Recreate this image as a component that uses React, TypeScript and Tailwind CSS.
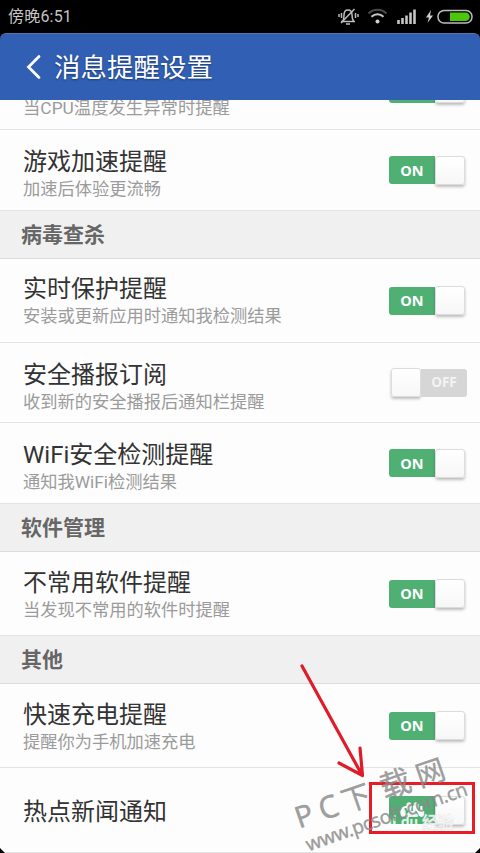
type Row = {
  title?: string;
  sub?: string;
  on: boolean;
  height: string;
  pad?: string;
};

type Group = {
  name?: string;
  headClass?: string;
  rows: Row[];
};

const groups: Group[] = [
  {
    rows: [{ title: "游戏加速提醒", sub: "加速后体验更流畅", on: true, height: "h-[81px]", pad: "pt-[18px]" }],
  },
  {
    name: "病毒查杀",
    headClass: "h-12",
    rows: [
      { title: "实时保护提醒", sub: "安装或更新应用时通知我检测结果", on: true, height: "h-[84px]", pad: "pt-4" },
      { title: "安全播报订阅", sub: "收到新的安全播报后通知栏提醒", on: false, height: "h-20", pad: "pt-[18px]" },
      { title: "WiFi安全检测提醒", sub: "通知我WiFi检测结果", on: true, height: "h-[81px]", pad: "pt-[18px]" },
    ],
  },
  {
    name: "软件管理",
    headClass: "h-12",
    rows: [{ title: "不常用软件提醒", sub: "当发现不常用的软件时提醒", on: true, height: "h-[84px]" }],
  },
  {
    name: "其他",
    headClass: "h-12",
    rows: [
      { title: "快速充电提醒", sub: "提醒你为手机加速充电", on: true, height: "h-[84px]" },
      { title: "热点新闻通知", on: true, height: "h-[85px]" },
    ],
  },
];

function Toggle({ on }: { on: boolean }) {
  const knob = (
    <span className="h-[29px] w-[30px] shrink-0 rounded-[3px] border border-[#dcdcdc] bg-linear-to-b from-white to-[#f7f7f7] shadow-[0_2px_3px_rgba(0,0,0,0.25)]" />
  );

  if (!on) {
    return (
      <span className="mr-[13px] flex h-[29px] w-[76px] shrink-0 items-center">
        {knob}
        <span className="flex h-7 flex-1 items-center justify-center rounded-r-[3px] bg-[#d6d6d6] font-['Open_Sans',sans-serif] text-[13.5px] font-bold text-[#f3f3f3]">
          OFF
        </span>
      </span>
    );
  }

  return (
    <span className="mr-[15px] flex h-[29px] w-[76px] shrink-0 items-center">
      <span className="flex h-7 flex-1 items-center justify-center rounded-l-[3px] bg-[#50b074] pt-px font-['Open_Sans',sans-serif] text-[14.5px] font-bold text-white">
        ON
      </span>
      {knob}
    </span>
  );
}

function SettingRow({ title, sub, on, height, pad = "pt-[17px]" }: Row) {
  return (
    <div className={`flex items-center justify-between border-b border-[#e4e4e4] pl-[23px] ${height}`}>
      <div className={sub ? `h-full ${pad}` : "pt-[3px]"}>
        <div className="text-2xl leading-7 whitespace-nowrap text-[#333]">{title}</div>
        {sub && <div className="-mt-px text-[17.25px] leading-7 whitespace-nowrap text-[#9b9b9b]">{sub}</div>}
      </div>
      <Toggle on={on} />
    </div>
  );
}

function StatusBar() {
  return (
    <div className="flex h-[33px] items-center justify-between pl-2 text-[#c4c4c4]">
      <span className="pt-px text-base leading-none tracking-[0.2px]">傍晚6:51</span>
      <svg width="144" height="33" viewBox="336 0 144 33" fill="none">
        {/* muted bell */}
        <g stroke="#bdbdbd" strokeWidth="1.5">
          <path d="M341 21.5h14M343 21c1-2 1-3 1-6 0-3 1.500-5 4-5s4 2 4 5c0 3 0 4 1.500 6" />
          <path d="M346 24h4M354.500 9 341 23" />
          <path d="M341.500 13v5M339 14v3M355.500 13v5M358 14v3" />
        </g>
        {/* wifi */}
        <path d="M368.500 13.500c5-5 13-5 18 0" stroke="#4a4a4a" strokeWidth="2" />
        <path d="M371.500 16.800c3.500-3.300 8.500-3.300 12 0" stroke="#c8c8c8" strokeWidth="2" />
        <circle cx="377.500" cy="21.500" r="2" fill="#d0d0d0" />
        {/* signal */}
        <path d="M398.500 24v-4M402.500 24v-6M406.500 24v-8.500M410.500 24V12.500M414.500 24V9.500" stroke="#c4c4c4" strokeWidth="2.600" />
        {/* charging battery */}
        <path d="m431 10-5 7.500h3l-1.500 5.500 5.500-7.500h-3z" fill="#d0d0d0" />
        <rect x="438" y="10.500" width="34" height="12.500" rx="6" stroke="#bcbcbc" strokeWidth="1.500" />
        <path d="M450 12.500h15.500a4.250 4.250 0 0 1 0 8.500H450z" fill="#4bc60a" />
      </svg>
    </div>
  );
}

function Annotation() {
  return (
    <svg className="pointer-events-none absolute inset-0" width="480" height="853" viewBox="0 0 480 853" fill="none">
      {/* paw stamp */}
      <g fill="#fff" fillOpacity="0.85">
        <ellipse cx="403" cy="813" rx="2.800" ry="4" />
        <ellipse cx="409" cy="806.500" rx="2.800" ry="4.200" />
        <ellipse cx="416" cy="806.500" rx="2.800" ry="4.200" />
        <ellipse cx="421.500" cy="813" rx="2.800" ry="4" />
        <path d="M412 811c3 0 3 2 5 3s2 3-1 3h-8c-3 0-3-2-1-3s2-3 5-3z" />
        <text x="372" y="827" fontSize="17" fontWeight="bold" fontFamily="Roboto,sans-serif">Bai</text>
        <text x="401" y="827" fontSize="15" fontWeight="bold" fontFamily="Roboto,sans-serif">du</text>
        <text x="422" y="828" fontSize="16" fontWeight="bold" fontFamily="'Noto Sans CJK SC',sans-serif" stroke="#ddd" strokeWidth="0.400">
          经验
        </text>
      </g>

      <rect x="370.500" y="783.500" width="103" height="49" stroke="#e81c24" strokeWidth="3" />
      <path d="M302 666 362 775M339 763l23.500 12.500L360 748" stroke="#e01c28" strokeWidth="3.200" strokeLinecap="round" strokeLinejoin="round" />

      {/* site stamp */}
      <g
        fill="#8a8a8a"
        fillOpacity="0.82"
        stroke="#8a8a8a"
        strokeOpacity="0.6"
        strokeWidth="0.500"
        fontFamily="'Noto Sans','Noto Sans CJK SC',sans-serif"
      >
        <g transform="translate(300 828.500) rotate(-19)">
          <text x="-1" y="0" fontSize="30">P</text>
          <text x="24" y="0" fontSize="31">C</text>
          <text x="48.500" y="0" fontSize="29">下</text>
          <text x="89" y="0" fontSize="31">载</text>
          <text x="127" y="0" fontSize="29">网</text>
        </g>
        <text transform="translate(308.500 851.500) rotate(-19.500)" fontSize="19.500" textLength="170">
          www.pcsoft.com.cn
        </text>
      </g>

      {/* screen corners */}
      <path d="M0 848v5h5zM480 848v5h-5z" fill="#000" />
    </svg>
  );
}

export default function App() {
  return (
    <div className="relative h-[853px] w-[480px] overflow-hidden bg-black font-[Roboto,'Noto_Sans_CJK_SC',sans-serif]">
      <StatusBar />
      <header className="flex h-[67px] items-center rounded-t-[6px] border-t border-[#5275ae] bg-[#305fb3] text-white">
        <svg className="ml-[25px] h-[26px] w-4" viewBox="0 0 16 26" fill="none">
          <path d="M14 2.500 3.500 13 14 23.500" stroke="currentColor" strokeWidth="2.800" strokeLinecap="round" />
        </svg>
        <h1 className="mt-[3px] ml-[13px] text-[26.5px] leading-none [text-shadow:0_1px_2px_rgba(0,0,0,0.4)]">
          消息提醒设置
        </h1>
      </header>

      <main className="bg-[#fdfdfd]">
        {/* row scrolled half under the header */}
        <div className="flex h-[30px] items-end justify-between overflow-hidden border-b border-[#e4e4e4] pl-[23px]">
          <div className="pb-[7px] text-[17.35px] leading-7 text-[#9b9b9b]">当CPU温度发生异常时提醒</div>
          <div className="pb-[26px]">
            <Toggle on />
          </div>
        </div>

        {groups.map((group, i) => (
          <section key={i}>
            {group.name && (
              <h2
                className={`flex items-center border-b border-[#dcdcdc] bg-[#f0f0f0] pt-0.5 pl-[21px] text-[21px] leading-none font-bold text-[#666] ${group.headClass}`}
              >
                {group.name}
              </h2>
            )}
            {group.rows.map((row) => (
              <SettingRow key={row.title} {...row} />
            ))}
          </section>
        ))}
      </main>
      <Annotation />
    </div>
  );
}
